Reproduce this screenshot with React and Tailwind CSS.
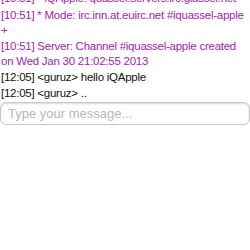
import React from 'react';

const lines = [
  { text: '[10:51] * iQApple: quassel.servers.irc.glassel.net', color: 'text-[#a424ae]', nowrap: true },
  { text: '[10:51] * Mode: irc.inn.at.euirc.net #iquassel-apple +', color: 'text-[#a424ae]' },
  { text: '[10:51] Server: Channel #iquassel-apple created on Wed Jan 30 21:02:55 2013', color: 'text-[#a424ae]' },
  { text: '[12:05] <guruz> hello iQApple', color: 'text-[#111]' },
  { text: '[12:05] <guruz> ..', color: 'text-[#111]' },
];

export default function App() {
  return (
    <div className="w-[250px] h-[250px] bg-white overflow-hidden" style={{ fontFamily: '"Liberation Sans", Arial, sans-serif' }}>
      <div className="-mt-[9px] px-[1px] flex flex-col gap-[1px] text-[11.5px] leading-[15px] tracking-[-0.25px]">
        {lines.map((l, i) => (
          <div key={i} className={`${l.color} ${l.nowrap ? 'whitespace-nowrap overflow-hidden' : 'whitespace-pre-wrap'} ${i === 1 ? 'mt-[1px]' : ''}`}>{l.text}</div>
        ))}
      </div>
      <div className="mt-[1px] h-[23px] border border-[#c8c8c8] rounded-[6px] shadow-[inset_0_1px_2px_rgba(0,0,0,0.15)] flex items-center px-[7px]">
        <span className="text-[13px] text-[#b8b8b8]">Type your message...</span>
      </div>
    </div>
  );
}
